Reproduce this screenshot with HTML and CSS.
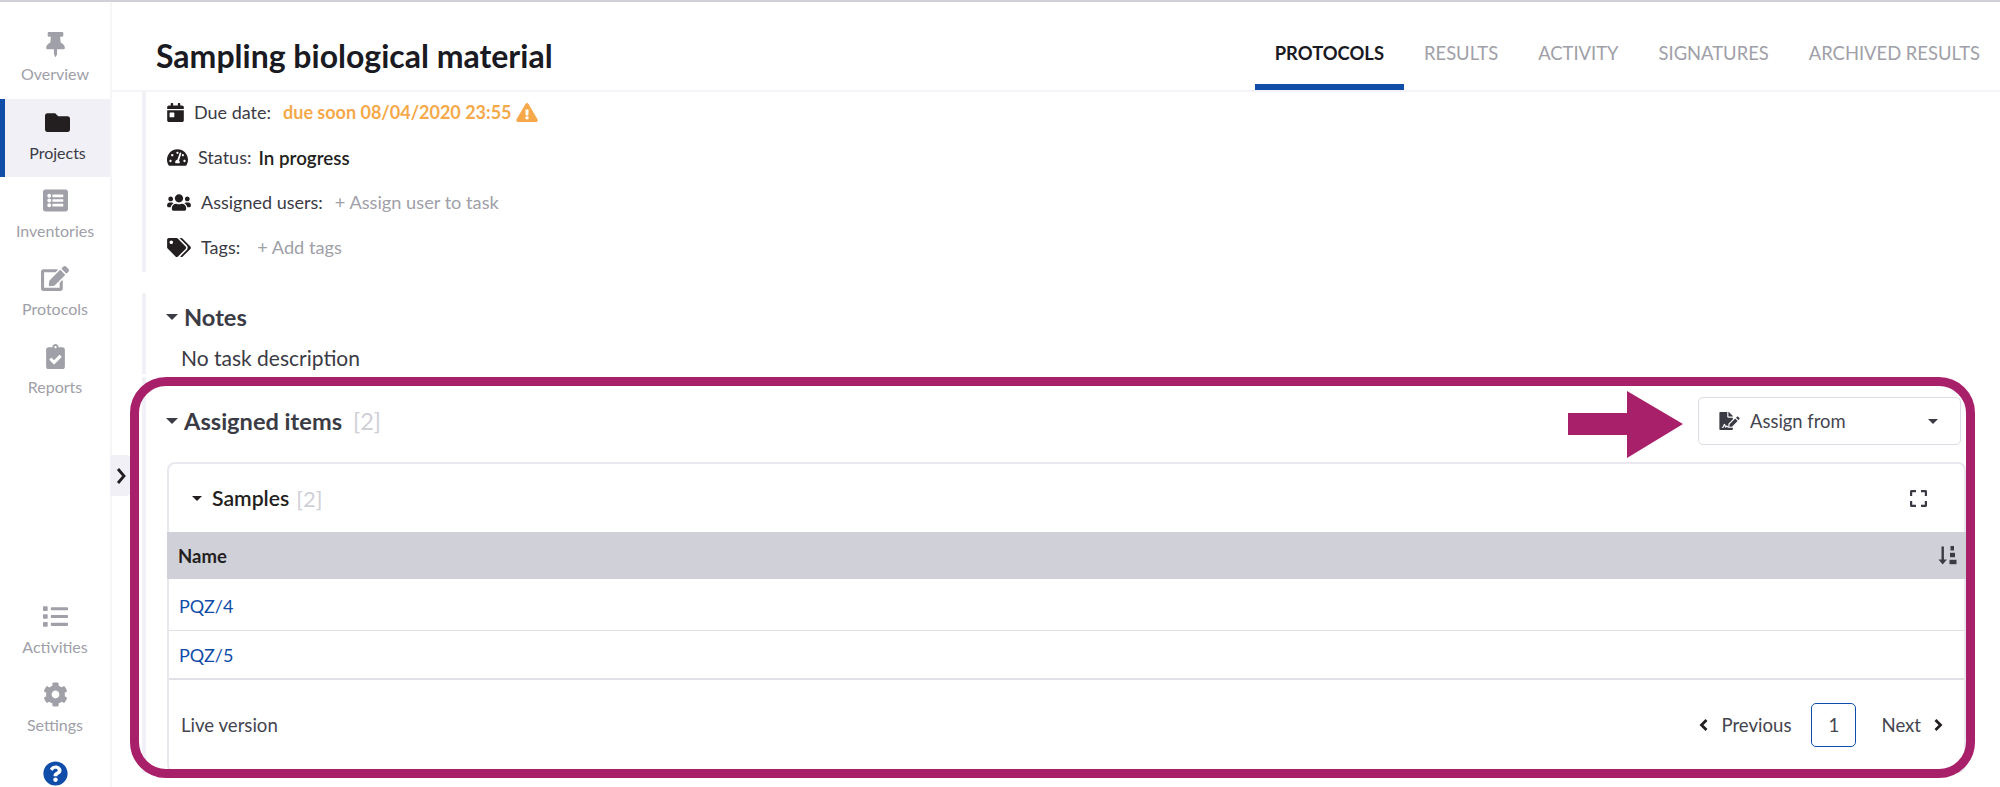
FILE: index.html
```html
<!DOCTYPE html>
<html lang="en">
<head>
    <meta charset="UTF-8">
    <meta name="viewport" content="width=device-width, initial-scale=1.0">
    <title>Sampling biological material</title>
    <link rel="stylesheet" href="styles.css">
</head>
<body>
    <div class="app">
        <nav class="sidebar">
            <a class="nav-item">
                <svg class="nav-icon" viewBox="0 0 384 512" style="width:19px;height:25px"><path d="M298.028 214.267L285.793 96H328c13.255 0 24-10.745 24-24V24c0-13.255-10.745-24-24-24H56C42.745 0 32 10.745 32 24v48c0 13.255 10.745 24 24 24h42.207L85.972 214.267C37.465 236.82 0 277.261 0 328c0 13.255 10.745 24 24 24h136v104.007c0 1.242.289 2.467.845 3.578l24 48c2.941 5.882 11.364 5.893 14.311 0l24-48a8.008 8.008 0 0 0 .845-3.578V352h136c13.255 0 24-10.745 24-24-.001-51.183-37.983-91.42-85.973-113.733z"/></svg>
                <span>Overview</span>
            </a>
            <a class="nav-item active">
                <svg class="nav-icon" viewBox="0 0 512 512" style="width:25px;height:25px"><path d="M464 128H272l-64-64H48C21.49 64 0 85.49 0 112v288c0 26.51 21.49 48 48 48h416c26.51 0 48-21.49 48-48V176c0-26.51-21.49-48-48-48z"/></svg>
                <span>Projects</span>
            </a>
            <a class="nav-item">
                <svg class="nav-icon" viewBox="0 0 512 512" style="width:25px;height:25px"><path d="M464 480H48c-26.51 0-48-21.49-48-48V80c0-26.51 21.49-48 48-48h416c26.51 0 48 21.49 48 48v352c0 26.51-21.49 48-48 48zM128 120c-22.091 0-40 17.909-40 40s17.909 40 40 40 40-17.909 40-40-17.909-40-40-40zm0 96c-22.091 0-40 17.909-40 40s17.909 40 40 40 40-17.909 40-40-17.909-40-40-40zm0 96c-22.091 0-40 17.909-40 40s17.909 40 40 40 40-17.909 40-40-17.909-40-40-40zm288-136v-32c0-6.627-5.373-12-12-12H204c-6.627 0-12 5.373-12 12v32c0 6.627 5.373 12 12 12h200c6.627 0 12-5.373 12-12zm0 96v-32c0-6.627-5.373-12-12-12H204c-6.627 0-12 5.373-12 12v32c0 6.627 5.373 12 12 12h200c6.627 0 12-5.373 12-12zm0 96v-32c0-6.627-5.373-12-12-12H204c-6.627 0-12 5.373-12 12v32c0 6.627 5.373 12 12 12h200c6.627 0 12-5.373 12-12z"/></svg>
                <span>Inventories</span>
            </a>
            <a class="nav-item">
                <svg class="nav-icon" viewBox="0 0 576 512" style="width:28px;height:25px"><path d="M402.6 83.2l90.2 90.2c3.8 3.8 3.8 10 0 13.8L274.4 405.6l-92.8 10.3c-12.4 1.4-22.9-9.1-21.5-21.5l10.3-92.8L388.8 83.2c3.8-3.8 10-3.8 13.8 0zm162-22.9l-48.8-48.8c-15.2-15.2-39.9-15.2-55.2 0l-35.4 35.4c-3.8 3.8-3.8 10 0 13.8l90.2 90.2c3.8 3.8 10 3.8 13.8 0l35.4-35.4c15.2-15.3 15.2-40 0-55.2zM384 346.2V448H64V128h229.8c3.2 0 6.2-1.3 8.5-3.5l40-40c7.6-7.6 2.2-20.5-8.5-20.5H48C21.5 64 0 85.5 0 112v352c0 26.5 21.5 48 48 48h352c26.5 0 48-21.5 48-48V306.2c0-10.7-12.9-16-20.5-8.5l-40 40c-2.2 2.3-3.5 5.3-3.5 8.5z"/></svg>
                <span>Protocols</span>
            </a>
            <a class="nav-item">
                <svg class="nav-icon" viewBox="0 0 384 512" style="width:19px;height:25px"><path d="M336 64h-80c0-35.3-28.7-64-64-64s-64 28.7-64 64H48C21.5 64 0 85.5 0 112v352c0 26.5 21.5 48 48 48h288c26.5 0 48-21.5 48-48V112c0-26.5-21.5-48-48-48zM192 40c13.3 0 24 10.7 24 24s-10.7 24-24 24-24-10.7-24-24 10.7-24 24-24zm121.2 231.8l-143 141.8c-4.7 4.7-12.3 4.6-17-.1l-82.6-83.3c-4.7-4.7-4.6-12.3.1-17L99.1 285c4.7-4.7 12.3-4.6 17 .1l46 46.4 106-105.2c4.7-4.7 12.3-4.6 17 .1l28.2 28.4c4.7 4.8 4.6 12.3-.1 17z"/></svg>
                <span>Reports</span>
            </a>
            <div class="nav-spacer"></div>
            <a class="nav-item">
                <svg class="nav-icon" viewBox="0 0 512 512" style="width:25px;height:25px"><path d="M80 368H16a16 16 0 0 0-16 16v64a16 16 0 0 0 16 16h64a16 16 0 0 0 16-16v-64a16 16 0 0 0-16-16zm0-320H16A16 16 0 0 0 0 64v64a16 16 0 0 0 16 16h64a16 16 0 0 0 16-16V64a16 16 0 0 0-16-16zm0 160H16a16 16 0 0 0-16 16v64a16 16 0 0 0 16 16h64a16 16 0 0 0 16-16v-64a16 16 0 0 0-16-16zm416 176H176a16 16 0 0 0-16 16v32a16 16 0 0 0 16 16h320a16 16 0 0 0 16-16v-32a16 16 0 0 0-16-16zm0-320H176a16 16 0 0 0-16 16v32a16 16 0 0 0 16 16h320a16 16 0 0 0 16-16V80a16 16 0 0 0-16-16zm0 160H176a16 16 0 0 0-16 16v32a16 16 0 0 0 16 16h320a16 16 0 0 0 16-16v-32a16 16 0 0 0-16-16z"/></svg>
                <span>Activities</span>
            </a>
            <a class="nav-item">
                <svg class="nav-icon" viewBox="0 0 512 512" style="width:25px;height:25px"><path d="M487.4 315.7l-42.6-24.6c4.3-23.2 4.3-47 0-70.2l42.6-24.6c4.9-2.8 7.1-8.6 5.5-14-11.1-35.6-30-67.8-54.7-94.6-3.8-4.1-10-5.1-14.8-2.3L380.8 110c-17.9-15.4-38.5-27.3-60.8-35.1V25.8c0-5.6-3.9-10.5-9.4-11.7-36.7-8.2-74.3-7.8-109.2 0-5.5 1.2-9.4 6.1-9.4 11.7V75c-22.2 7.9-42.8 19.8-60.8 35.1L88.7 85.5c-4.9-2.8-11-1.9-14.8 2.3-24.7 26.7-43.6 58.9-54.7 94.6-1.7 5.4.6 11.2 5.5 14L67.3 221c-4.3 23.2-4.3 47 0 70.2l-42.6 24.6c-4.9 2.8-7.1 8.6-5.5 14 11.1 35.6 30 67.8 54.7 94.6 3.8 4.1 10 5.1 14.8 2.3l42.6-24.6c17.9 15.4 38.5 27.3 60.8 35.1v49.2c0 5.6 3.9 10.5 9.4 11.7 36.7 8.2 74.3 7.8 109.2 0 5.5-1.2 9.4-6.1 9.4-11.7v-49.2c22.2-7.9 42.8-19.8 60.8-35.1l42.6 24.6c4.9 2.8 11 1.9 14.8-2.3 24.7-26.7 43.6-58.9 54.7-94.6 1.5-5.5-.7-11.3-5.6-14.1zM256 336c-44.1 0-80-35.9-80-80s35.9-80 80-80 80 35.9 80 80-35.9 80-80 80z"/></svg>
                <span>Settings</span>
            </a>
            <a class="nav-help">
                <svg viewBox="0 0 512 512" width="25" height="25"><path d="M504 256c0 136.997-111.043 248-248 248S8 392.997 8 256C8 119.083 119.043 8 256 8s248 111.083 248 248zM262.655 90c-54.497 0-89.255 22.957-116.549 63.758-3.536 5.286-2.353 12.415 2.715 16.258l34.699 26.31c5.205 3.947 12.621 3.008 16.665-2.122 17.864-22.658 30.113-35.797 57.303-35.797 20.429 0 45.698 13.148 45.698 32.958 0 14.976-12.363 22.667-32.534 33.976C247.128 238.528 216 254.941 216 296v4c0 6.627 5.373 12 12 12h56c6.627 0 12-5.373 12-12v-1.333c0-28.462 83.186-29.647 83.186-106.667 0-58.002-60.165-102-116.531-102zM256 338c-25.365 0-46 20.635-46 46 0 25.364 20.635 46 46 46s46-20.636 46-46c0-25.365-20.635-46-46-46z"/></svg>
            </a>
        </nav>

        <div class="collapse-tab">
            <svg viewBox="0 0 10 18" width="10" height="18"><polyline points="2,2 8,9 2,16"/></svg>
        </div>

        <main class="main">
            <header class="topbar">
                <h1 class="task-title">Sampling biological material</h1>
                <div class="tabs">
                    <a class="tab active">PROTOCOLS</a>
                    <a class="tab">RESULTS</a>
                    <a class="tab">ACTIVITY</a>
                    <a class="tab">SIGNATURES</a>
                    <a class="tab">ARCHIVED RESULTS</a>
                </div>
            </header>

            <div class="content">
                <section class="section details">
                    <div class="detail-row">
                        <svg class="detail-icon" viewBox="0 0 448 512" style="width:17px;height:19px"><path d="M0 464c0 26.5 21.5 48 48 48h352c26.5 0 48-21.5 48-48V192H0v272zm64-192c0-8.8 7.2-16 16-16h96c8.8 0 16 7.2 16 16v96c0 8.8-7.2 16-16 16H80c-8.8 0-16-7.2-16-16v-96zM400 64h-48V16c0-8.8-7.2-16-16-16h-32c-8.8 0-16 7.2-16 16v48H160V16c0-8.8-7.2-16-16-16h-32c-8.8 0-16 7.2-16 16v48H48C21.5 64 0 85.5 0 112v48h448v-48c0-26.5-21.5-48-48-48z"/></svg>
                        <span class="detail-label">Due date:</span>
                        <span class="due-soon">due soon 08/04/2020 23:55</span>
                        <svg class="warn-icon" viewBox="0 0 576 512" width="22" height="19"><path d="M569.517 440.013C587.975 472.007 564.806 512 527.94 512H48.054c-36.937 0-59.999-40.055-41.577-71.987L246.423 24.995c18.467-32.009 64.72-31.951 83.154 0l239.94 415.018zM288 354c-25.405 0-46 20.595-46 46s20.595 46 46 46 46-20.595 46-46-20.595-46-46-46zm-43.673-165.346l7.418 136c.347 6.364 5.609 11.346 11.982 11.346h48.546c6.373 0 11.635-4.982 11.982-11.346l7.418-136c.375-6.874-5.098-12.654-11.982-12.654h-63.383c-6.884 0-12.356 5.78-11.981 12.654z"/></svg>
                    </div>
                    <div class="detail-row">
                        <svg class="detail-icon" viewBox="0 0 576 512" style="width:21px;height:19px"><path d="M288 32C128.94 32 0 160.94 0 320c0 52.8 14.25 102.26 39.06 144.8 5.61 9.62 16.3 15.2 27.44 15.2h443c11.14 0 21.83-5.58 27.44-15.2C561.75 422.26 576 372.8 576 320c0-159.06-128.94-288-288-288zm0 64c14.71 0 26.58 10.13 30.32 23.65-1.11 2.26-2.64 4.23-3.45 6.67l-9.22 27.67c-5.13 3.49-10.97 6.01-17.64 6.01-17.67 0-32-14.33-32-32S270.33 96 288 96zM96 384c-17.67 0-32-14.33-32-32s14.33-32 32-32 32 14.33 32 32-14.33 32-32 32zm48-160c-17.67 0-32-14.33-32-32s14.33-32 32-32 32 14.33 32 32-14.33 32-32 32zm246.77-72.41l-61.33 184C343.13 347.33 352 364.54 352 384c0 11.72-3.38 22.55-8.88 32H232.88c-5.5-9.45-8.88-20.28-8.88-32 0-33.94 26.5-61.43 59.9-63.59l61.34-184.01c4.17-12.56 17.73-19.45 30.36-15.17 12.57 4.19 19.35 17.79 15.17 30.36zm14.66 57.2l15.52-46.55c3.47-1.29 7.13-2.23 11.05-2.23 17.67 0 32 14.33 32 32s-14.33 32-32 32c-11.38-.01-20.89-6.28-26.57-15.22zM480 384c-17.67 0-32-14.33-32-32s14.33-32 32-32 32 14.33 32 32-14.33 32-32 32z"/></svg>
                        <span class="detail-label">Status:</span>
                        <span class="status-value">In progress</span>
                    </div>
                    <div class="detail-row">
                        <svg class="detail-icon" viewBox="0 0 640 512" style="width:24px;height:19px"><path d="M96 224c35.3 0 64-28.7 64-64s-28.7-64-64-64-64 28.7-64 64 28.7 64 64 64zm448 0c35.3 0 64-28.7 64-64s-28.7-64-64-64-64 28.7-64 64 28.7 64 64 64zm32 32h-64c-17.6 0-33.5 7.1-45.1 18.6 40.3 22.1 68.9 62 75.1 109.4h66c17.7 0 32-14.3 32-32v-32c0-35.3-28.7-64-64-64zm-256 0c61.9 0 112-50.1 112-112S381.9 32 320 32 208 82.1 208 144s50.1 112 112 112zm76.8 32h-8.3c-20.8 10-43.9 16-68.5 16s-47.6-6-68.5-16h-8.3C179.6 288 128 339.6 128 403.2V432c0 26.5 21.5 48 48 48h288c26.5 0 48-21.5 48-48v-28.8c0-63.6-51.6-115.2-115.2-115.2zm-223.7-13.4C161.5 263.1 145.6 256 128 256H64c-35.3 0-64 28.7-64 64v32c0 17.7 14.3 32 32 32h65.9c6.3-47.4 34.9-87.3 75.2-109.4z"/></svg>
                        <span class="detail-label">Assigned users:</span>
                        <a class="detail-add">+ Assign user to task</a>
                    </div>
                    <div class="detail-row">
                        <svg class="detail-icon" viewBox="0 0 640 512" style="width:24px;height:19px"><path d="M497.941 225.941L286.059 14.059A48 48 0 0 0 252.118 0H48C21.49 0 0 21.49 0 48v204.118a48 48 0 0 0 14.059 33.941l211.882 211.882c18.744 18.745 49.136 18.746 67.882 0l204.118-204.118c18.745-18.745 18.745-49.137 0-67.882zM112 160c-26.51 0-48-21.49-48-48s21.49-48 48-48 48 21.49 48 48-21.49 48-48 48zm513.941 133.823L421.823 497.941c-18.745 18.745-49.137 18.745-67.882 0l-.36-.36L527.64 323.522c16.999-16.999 26.36-39.6 26.36-63.64s-9.362-46.641-26.36-63.64L331.397 0h48.721a48 48 0 0 1 33.941 14.059l211.882 211.882c18.745 18.745 18.745 49.137 0 67.882z"/></svg>
                        <span class="detail-label tags-label">Tags:</span>
                        <a class="detail-add">+ Add tags</a>
                    </div>
                </section>

                <section class="section notes">
                    <h2 class="section-title"><i class="caret"></i>Notes</h2>
                    <p class="notes-text">No task description</p>
                </section>

                <section class="section assigned">
                    <div class="assigned-head">
                        <h2 class="section-title"><i class="caret"></i>Assigned items <span class="count">[2]</span></h2>
                        <button class="assign-btn">
                            <svg viewBox="0 0 576 512" width="21" height="18"><path d="M218.17 424.14c-2.95-5.92-8.09-6.52-10.17-6.52s-7.22.59-10.02 6.19l-7.67 15.34c-6.37 12.78-25.03 11.37-29.48-2.09L144 386.59l-10.61 31.88c-5.89 17.66-22.38 29.53-41 29.53H80c-8.84 0-16-7.16-16-16s7.16-16 16-16h12.39c4.83 0 9.11-3.08 10.64-7.66l18.19-54.64c3.3-9.81 12.44-16.41 22.78-16.41s19.48 6.59 22.77 16.41l13.88 41.64c19.75-16.19 54.06-9.7 66 14.16 1.89 3.78 5.49 5.95 9.36 6.26v-82.12l128-127.09V160H248c-13.2 0-24-10.8-24-24V0H24C10.7 0 0 10.7 0 24v464c0 13.3 10.7 24 24 24h336c13.3 0 24-10.7 24-24v-40l-128-.11c-16.12-.31-30.58-9.28-37.83-23.75zM384 121.9c0-6.3-2.5-12.4-7-16.9L279.1 7c-4.5-4.5-10.6-7-17-7H256v128h128v-6.1zm-96 225.06V416h68.99l161.68-162.78-67.88-67.88L288 346.96zm280.54-179.63l-31.87-31.87c-9.94-9.94-26.07-9.94-36.01 0l-27.25 27.25 67.88 67.88 27.25-27.25c9.95-9.94 9.95-26.07 0-36.01z"/></svg>
                            <span class="assign-text">Assign from</span>
                            <i class="caret small"></i>
                        </button>
                    </div>

                    <div class="card">
                        <div class="card-head">
                            <div class="card-title"><i class="caret small"></i>Samples <span class="count">[2]</span></div>
                            <svg class="expand-icon" viewBox="0 0 17 17" width="17" height="17"><path d="M0 6V1.5C0 .7.7 0 1.5 0H6v2.2H2.2V6zM11 0h4.5c.8 0 1.5.7 1.5 1.5V6h-2.2V2.2H11zM17 11v4.5c0 .8-.7 1.5-1.5 1.5H11v-2.2h3.8V11zM6 17H1.5C.7 17 0 16.3 0 15.5V11h2.2v3.8H6z"/></svg>
                        </div>
                        <div class="table-head">
                            <span>Name</span>
                            <svg viewBox="0 0 19 19" width="19" height="19"><path d="M3.5 0.5h2.4v13h3l-4.2 5-4.2-5h3z"/><rect x="12.5" y="0" width="3.5" height="4.5"/><rect x="12" y="6.8" width="5" height="4.4"/><rect x="11.5" y="13.8" width="7" height="4.4"/></svg>
                        </div>
                        <div class="table-row first"><a>PQZ/4</a></div>
                        <div class="table-row"><a>PQZ/5</a></div>
                        <div class="card-foot">
                            <span class="version">Live version</span>
                            <div class="pager">
                                <a class="pager-link">
                                    <svg viewBox="0 0 10 14" width="10" height="14"><polyline points="7.5,2 2.5,7 7.5,12"/></svg>
                                    Previous
                                </a>
                                <a class="pager-num">1</a>
                                <a class="pager-link">
                                    Next
                                    <svg viewBox="0 0 10 14" width="10" height="14"><polyline points="2.5,2 7.5,7 2.5,12"/></svg>
                                </a>
                            </div>
                        </div>
                    </div>
                </section>
            </div>
        </main>

        <!-- annotation drawn over the screenshot -->
        <div class="callout-frame"></div>
        <svg class="callout-arrow" viewBox="0 0 115 67" width="115" height="67"><polygon points="0,22 59,22 59,0 115,33 59,67 59,44 0,44"/></svg>
    </div>
</body>
</html>
```

FILE: styles.css
```css
* {
    box-sizing: border-box;
}
body {
    margin: 0;
    font-family: Lato, "Open Sans", sans-serif;
    font-size: 18px;
    color: #3b3b45;
    background-color: #fff;
}
a {
    color: inherit;
    text-decoration: none;
}
.app {
    position: relative;
    display: flex;
    height: 787px;
    overflow: hidden;
    border-top: 2px solid #d0d0d8;
}

/* Sidebar */
.sidebar {
    display: flex;
    flex-direction: column;
    flex: none;
    width: 112px;
    height: 785px;
    padding-top: 19px;
    border-right: 2px solid #f6f6f9;
    background-color: #fff;
}
.nav-item {
    display: flex;
    flex-direction: column;
    align-items: center;
    flex: none;
    height: 78px;
    padding-top: 11px;
    font-size: 16px;
    line-height: 20px;
    color: #a0a0a8;
}
.nav-icon {
    display: block;
    margin-bottom: 8px;
    fill: #a0a0a8;
}
.nav-item:first-child .nav-icon {
    margin-bottom: 7px;
}
.nav-item.active {
    color: #3b3b45;
    background-color: #f0f0f6;
    border-left: 5px solid #104da9;
}
.nav-item.active .nav-icon {
    fill: #231f20;
}
.nav-spacer {
    flex: 1;
}
.nav-help {
    display: flex;
    justify-content: center;
    flex: none;
    height: 38px;
    padding-top: 12px;
}
.nav-help svg {
    fill: #104da9;
}
.collapse-tab {
    position: absolute;
    left: 110px;
    top: 453px;
    width: 23px;
    height: 41px;
    display: flex;
    align-items: center;
    padding-left: 6px;
    border-radius: 0 8px 8px 0;
    background-color: #f0f0f6;
}
.collapse-tab polyline,
.pager-link polyline {
    fill: none;
    stroke: #231f20;
    stroke-width: 2.8;
}

/* Header */
.main {
    flex: 1;
    min-width: 0;
}
.topbar {
    display: flex;
    justify-content: space-between;
    align-items: flex-end;
    height: 90px;
    padding: 0 0 0 44px;
    border-bottom: 2px solid #f4f4f8;
}
.task-title {
    margin: 0 0 14px;
    font-size: 32px;
    line-height: 40px;
    font-weight: 700;
    color: #1a1a22;
}
.tabs {
    display: flex;
}
.tab {
    height: 64px;
    padding: 15px 20px 0;
    font-size: 18.4px;
    line-height: 24px;
    color: #a0a0a8;
}
.tab.active {
    font-weight: 700;
    color: #1a1a22;
    border-bottom: 6px solid #104da9;
}

/* Content */
.content {
    padding: 0 34px 0 30px;
}
.section {
    padding-left: 21px;
    border-left: 4px solid #f0f0f6;
}
.details {
    height: 180px;
}
.detail-row {
    display: flex;
    align-items: center;
    height: 40px;
    margin-bottom: 5px;
}
.detail-icon {
    flex: none;
    margin-right: 10px;
    fill: #231f20;
}
.detail-label {
    margin-right: 12px;
}
.tags-label {
    margin-right: 17px;
}
.due-soon {
    font-weight: 700;
    color: #f5a94a;
}
.warn-icon {
    margin-left: 4px;
    fill: #f5a94a;
}
.status-value {
    font-size: 18.8px;
    font-weight: 600;
    color: #231f20;
    margin-left: -5px;
}
.detail-add {
    font-size: 18.2px;
    color: #a0a0a8;
}
.notes {
    height: 81px;
    margin-top: 21px;
}
.section-title {
    display: flex;
    align-items: center;
    margin: 0;
    height: 48px;
    font-size: 23.6px;
    font-weight: 700;
    color: #3b3b45;
}
.caret {
    flex: none;
    width: 0;
    height: 0;
    margin: 0 6px 0 -1px;
    border-left: 6px solid transparent;
    border-right: 6px solid transparent;
    border-top: 6px solid #3b3b45;
}
.caret.small {
    margin-left: 0;
    border-left-width: 5.5px;
    border-right-width: 5.5px;
    border-top-width: 5.5px;
    border-top-color: #231f20;
}
.count {
    margin-left: 11px;
    font-size: 23.5px;
    font-weight: 400;
    color: #d0d0d8;
}
.notes-text {
    margin: 0;
    padding-left: 14px;
    font-size: 21px;
    line-height: 33px;
}
.assigned {
    height: 396px;
    padding-top: 20px;
    margin-top: 3px;
}
.assigned-head {
    display: flex;
    justify-content: space-between;
    align-items: center;
    height: 48px;
    padding-right: 5px;
    margin-bottom: 17px;
}
.assign-btn {
    display: flex;
    align-items: center;
    width: 263px;
    height: 48px;
    padding: 0 22px 0 20px;
    border: 1px solid #dcdce4;
    border-radius: 5px;
    background-color: #fff;
    font-family: inherit;
    font-size: 18.4px;
    color: #45454f;
}
.assign-btn svg {
    fill: #3b3b45;
    margin-right: 10px;
}
.assign-text {
    flex: 1;
    text-align: left;
}
.assign-btn .caret {
    margin-right: 0;
    border-top-color: #3b3b45;
}

/* Samples card */
.card {
    height: 311px;
    border: 2px solid #e8e8ee;
    border-radius: 8px;
}
.card-head {
    display: flex;
    justify-content: space-between;
    align-items: center;
    height: 68px;
    padding: 0 37px 0 23px;
}
.card-title {
    display: flex;
    align-items: center;
    font-size: 21.2px;
    font-weight: 600;
    color: #231f20;
}
.card-title .caret {
    margin-right: 10px;
}
.card-title .count {
    margin-left: 7px;
    font-size: 22px;
}
.expand-icon {
    fill: #3b3b45;
}
.table-head {
    display: flex;
    justify-content: space-between;
    align-items: center;
    height: 47px;
    padding: 0 9px 0 11px;
    margin: 0 -2px;
    background-color: #d0d0d8;
    font-size: 18.5px;
    font-weight: 700;
    color: #231f20;
}
.table-head svg {
    fill: #3b3b45;
}
.table-row {
    display: flex;
    align-items: center;
    height: 48px;
    padding-left: 10px;
    border-bottom: 1px solid #e0e0e6;
    color: #104da9;
}
.table-row.first {
    height: 52px;
    padding-top: 2px;
}
.card-foot {
    display: flex;
    justify-content: space-between;
    align-items: center;
    height: 91px;
    padding: 0 21px 0 12px;
    border-top: 1px solid #e0e0e6;
    font-size: 18.6px;
    color: #45454f;
}
.pager {
    display: flex;
    align-items: center;
}
.pager-link {
    display: flex;
    align-items: center;
    gap: 12px;
}
.pager-num {
    display: flex;
    justify-content: center;
    align-items: center;
    width: 45px;
    height: 44px;
    margin: 0 25px 0 20px;
    border: 1px solid #104da9;
    border-radius: 5px;
}

/* Annotation */
.callout-frame {
    position: absolute;
    left: 130px;
    top: 375px;
    width: 1845px;
    height: 401px;
    border: 9px solid #a82069;
    border-radius: 36px;
}
.callout-arrow {
    position: absolute;
    left: 1568px;
    top: 389px;
    fill: #a82069;
}
```
